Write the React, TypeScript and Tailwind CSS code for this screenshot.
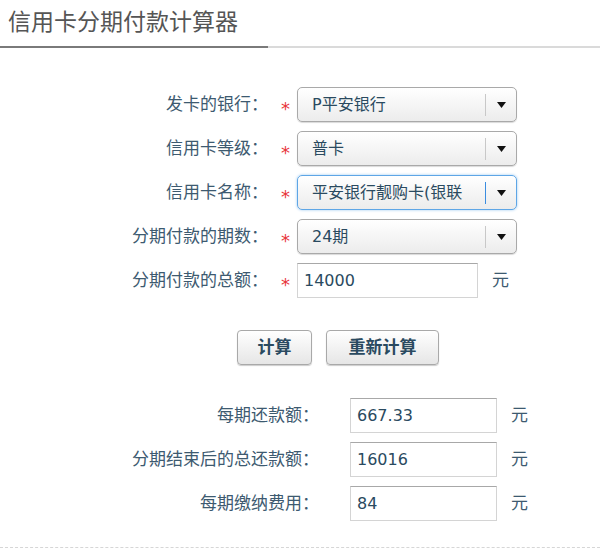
const font = { fontFamily: '"DejaVu Sans", "Noto Sans CJK SC", sans-serif' }

function Star() {
  return (
    <span className="w-[29px] translate-y-[4px] pl-[13px] text-left text-[18px] leading-none text-[#e8343a]">*</span>
  )
}

function Select({ value, focused }: { value: string; focused?: boolean }) {
  return (
    <div
      className={[
        'flex h-[35px] w-[220px] items-center rounded-[5px] border bg-gradient-to-b from-white to-[#ececec]',
        focused
          ? 'border-[#5ea6e6] shadow-[0_0_3px_#9cc8f0]'
          : 'border-[#a9a9a9] shadow-[0_1px_1px_rgba(0,0,0,0.15)]',
      ].join(' ')}
    >
      <span className="flex-1 overflow-hidden whitespace-nowrap pl-[14px] text-[16px] text-[#2a4a60]">{value}</span>
      <span className={focused ? 'h-[22px] w-px bg-[#3b8de0]' : 'h-[22px] w-px bg-[#c8c8c8]'} />
      <span className="flex w-[30px] justify-center">
        <svg width="9" height="6" viewBox="0 0 9 6">
          <path d="M0 0 L9 0 L4.5 6 Z" fill="#111" />
        </svg>
      </span>
    </div>
  )
}

function Field({ value, width }: { value: string; width: string }) {
  return (
    <div
      className={`flex h-[35px] ${width} items-center border border-[#d4d4d4] border-t-[#a8a8a8] bg-white pl-[6px] text-[16px] text-[#2a4a60]`}
    >
      {value}
    </div>
  )
}

export default function App() {
  const selects = [
    { label: '发卡的银行：', value: 'P平安银行' },
    { label: '信用卡等级：', value: '普卡' },
    { label: '信用卡名称：', value: '平安银行靓购卡(银联', focused: true },
    { label: '分期付款的期数：', value: '24期' },
  ]

  const results = [
    { label: '每期还款额：', value: '667.33' },
    { label: '分期结束后的总还款额：', value: '16016' },
    { label: '每期缴纳费用：', value: '84' },
  ]

  return (
    <div className="h-[550px] w-[600px] overflow-hidden bg-white" style={font}>
      {/* Header */}
      <div className="h-[46px] pl-[8px] pt-[7px] text-[23px] leading-[30px] text-[#555]">信用卡分期付款计算器</div>
      <div className="flex h-[2px]">
        <div className="w-[268px] bg-[#7a7a7a]" />
        <div className="flex-1 bg-[#dadada]" />
      </div>

      {/* Form */}
      <div className="mt-[39px] flex flex-col gap-[9px]">
        {selects.map((s) => (
          <div key={s.label} className="flex items-center">
            <div className="w-[268px] text-right text-[17px] text-[#3d5a70]">{s.label}</div>
            <Star />
            <Select value={s.value} focused={s.focused} />
          </div>
        ))}
        <div className="flex items-center">
          <div className="w-[268px] text-right text-[17px] text-[#3d5a70]">分期付款的总额：</div>
          <Star />
          <Field value="14000" width="w-[181px]" />
          <span className="ml-[14px] text-[17px] text-[#3d5a70]">元</span>
        </div>
      </div>

      {/* Buttons */}
      <div className="ml-[237px] mt-[32px] flex gap-[14px]">
        <button className="h-[35px] w-[75px] rounded-[4px] border border-[#a9a9a9] bg-gradient-to-b from-white to-[#e6e6e6] text-[17px] font-bold text-[#2a4a60] shadow-[0_1px_1px_rgba(0,0,0,0.2)]">
          计算
        </button>
        <button className="h-[35px] w-[113px] rounded-[4px] border border-[#a9a9a9] bg-gradient-to-b from-white to-[#e6e6e6] text-[17px] font-bold text-[#2a4a60] shadow-[0_1px_1px_rgba(0,0,0,0.2)]">
          重新计算
        </button>
      </div>

      {/* Results */}
      <div className="mt-[33px] flex flex-col gap-[9px]">
        {results.map((r) => (
          <div key={r.label} className="flex items-center">
            <div className="w-[319px] text-right text-[17px] text-[#3d5a70]">{r.label}</div>
            <div className="w-[31px]" />
            <Field value={r.value} width="w-[147px]" />
            <span className="ml-[14px] text-[17px] text-[#3d5a70]">元</span>
          </div>
        ))}
      </div>

      <div className="mt-[26px] border-t border-dashed border-[#d6d6d6]" />
    </div>
  )
}
